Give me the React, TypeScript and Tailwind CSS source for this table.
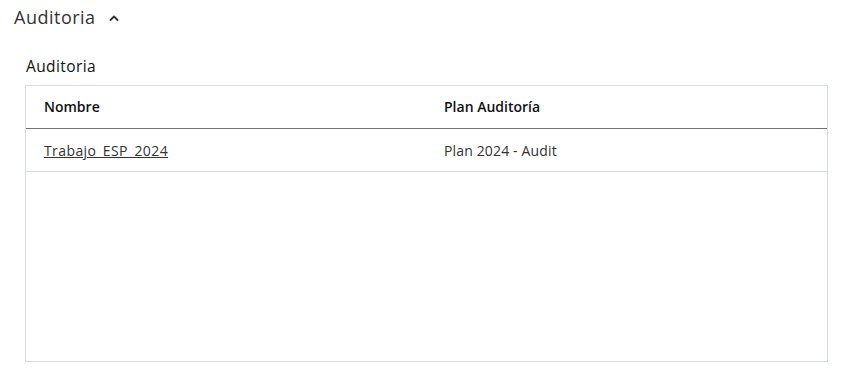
export default function App() {
  const rows = [{ nombre: "Trabajo_ESP_2024", plan: "Plan 2024 - Audit" }]

  return (
    <div className="bg-white w-[858px] h-[371px] text-[#222] font-['Open_Sans',sans-serif]">
      <div className="flex items-center pl-[14px] pt-[8px] h-[25px]">
        <span className="text-[18px] tracking-[0.5px] text-[#333] leading-none">Auditoria</span>
        <svg className="ml-[13px] mt-[2px]" width="10" height="8" viewBox="0 0 10 8" fill="none">
          <path d="M1.5 6 L5 2.5 L8.5 6" stroke="#333" strokeWidth="1.8" strokeLinecap="round" strokeLinejoin="round" />
        </svg>
      </div>

      <div className="pl-[25px] pr-[30px] pt-[34px]">
        <h3 className="pl-[1px] text-[15.5px] tracking-[0.4px] font-medium text-[#111] leading-none mb-[10px]">Auditoria</h3>
        <div className="border border-[#d6dddd] h-[277px]">
          <table className="w-full border-collapse text-[14px]">
            <thead>
              <tr className="h-[43px] border-b border-[#6f6f7e]">
                <th className="text-left font-semibold text-[#111] pl-[18px] w-[418px]">Nombre</th>
                <th className="text-left font-semibold text-[#111]">Plan Auditoría</th>
              </tr>
            </thead>
            <tbody>
              {rows.map((r, i) => (
                <tr key={i} className="h-[43px] border-b border-[#d6dddd]">
                  <td className="pl-[18px]">
                    <a href="#" className="underline tracking-[0.4px] text-[#333]">{r.nombre}</a>
                  </td>
                  <td className="text-[#333] tracking-[0.15px]">{r.plan}</td>
                </tr>
              ))}
            </tbody>
          </table>
        </div>
      </div>
    </div>
  )
}
